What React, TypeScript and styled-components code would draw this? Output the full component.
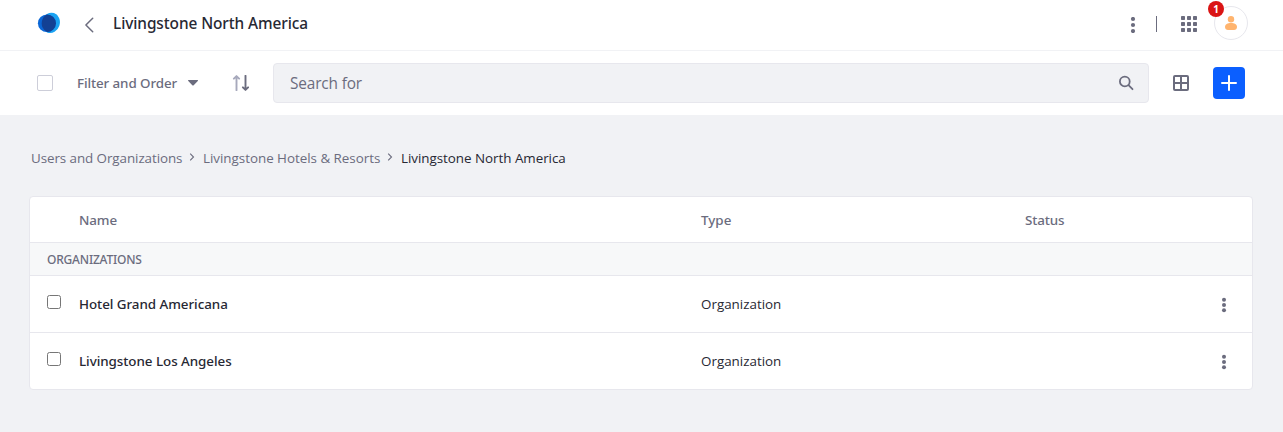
import React from 'react';
import styled, { createGlobalStyle } from 'styled-components';

const color = {
  text: '#272833',
  muted: '#6b6c7e',
  border: '#e7e7ed',
  page: '#f1f2f5',
  primary: '#0b5fff',
};

const GlobalStyle = createGlobalStyle`
  *, *::before, *::after { box-sizing: border-box; }
  body {
    margin: 0;
    background: ${color.page};
    color: ${color.text};
    font-family: 'Segoe UI', 'Open Sans', 'Noto Sans', sans-serif;
    font-size: 13.4px;
    line-height: 20px;
  }
  svg { display: block; flex: none; }
  button { font: inherit; border: 0; padding: 0; background: none; color: inherit; }
`;

const Page = styled.div`
  min-height: 432px;
  background: ${color.page};
`;

const Label = styled.span<{ $track?: number; $weight?: number; $size?: number }>`
  white-space: nowrap;
  letter-spacing: ${(p) => p.$track ?? 0}px;
  font-family: ${(p) => (p.$weight ? "'Segoe UI', 'Noto Sans', sans-serif" : 'inherit')};
  font-weight: ${(p) => p.$weight ?? 400};
  font-size: ${(p) => p.$size ?? 13.4}px;
`;

const Header = styled.header`
  display: flex;
  align-items: center;
  height: 51px;
  padding: 0 35px 4px 37px;
  background: #fff;
  border-bottom: 1px solid #f1f2f5;
`;

const BackButton = styled.button`
  display: flex;
  margin: 3px 18px 0 23px;
  color: ${color.muted};
`;

const Title = styled.h1`
  display: flex;
  flex: 1;
  margin: 0;
  padding-top: 2px;
  line-height: 24px;
`;

const IconButton = styled.button`
  display: flex;
  color: ${color.muted};
`;

const HeaderTools = styled.div`
  display: flex;
  align-items: center;
`;

const OptionsButton = styled(IconButton)`
  margin-top: 4px;
`;

const AppsButton = styled(IconButton)`
  margin-top: 2px;
`;

const Divider = styled.span`
  width: 1px;
  height: 16px;
  margin: 2px 24px 0 15px;
  background: ${color.muted};
`;

const Avatar = styled.div`
  position: relative;
  display: flex;
  align-items: center;
  justify-content: center;
  width: 34px;
  height: 34px;
  margin-left: 17px;
  border: 1px solid ${color.border};
  border-radius: 50%;
`;

const Badge = styled.span`
  position: absolute;
  top: -6px;
  left: -7px;
  width: 16px;
  height: 16px;
  border-radius: 50%;
  background: #da1414;
  color: #fff;
  font-size: 10px;
  font-weight: 700;
  line-height: 16px;
  text-align: center;
`;

const Toolbar = styled.div`
  display: flex;
  align-items: center;
  height: 64px;
  padding: 0 38px 0 37px;
  background: #fff;
`;

const SelectAll = styled.span`
  width: 16px;
  height: 16px;
  margin-right: 24px;
  border: 1px solid #cdced9;
  border-radius: 2px;
  background: #fff;
`;

const FilterButton = styled.button`
  display: flex;
  align-items: center;
  width: 122px;
  justify-content: space-between;
  color: ${color.muted};
`;

const SortButton = styled(IconButton)`
  margin: 0 24px 0 33px;
`;

const SearchBox = styled.div`
  display: flex;
  flex: 1;
  align-items: center;
  justify-content: space-between;
  height: 40px;
  padding: 0 14px 0 16px;
  border: 1px solid ${color.border};
  border-radius: 4px;
  background: ${color.page};
  color: ${color.muted};
`;

const Placeholder = styled(Label)`
  padding-top: 2px;
`;

const ViewButton = styled(IconButton)`
  margin: 0 24px;
`;

const AddButton = styled.button`
  display: flex;
  align-items: center;
  justify-content: center;
  width: 32px;
  height: 32px;
  border-radius: 4px;
  background: ${color.primary};
  color: #fff;
`;

const Breadcrumb = styled.nav`
  display: flex;
  align-items: center;
  height: 20px;
  margin: 33px 0 28px 31px;
  color: ${color.muted};
`;

const Crumb = styled.span<{ $width?: number; $current?: boolean }>`
  display: flex;
  width: ${(p) => (p.$width ? `${p.$width}px` : 'auto')};
  color: ${(p) => (p.$current ? color.text : 'inherit')};
`;

const CrumbArrow = styled.span`
  display: flex;
  width: 21px;
  padding: 0 0 2px 7px;
`;

const Table = styled.section`
  width: 1224px;
  margin-left: 29px;
  border: 1px solid ${color.border};
  border-radius: 4px;
  background: #fff;
  overflow: hidden;
`;

const Row = styled.div<{ $head?: boolean }>`
  display: grid;
  grid-template-columns: 32px 622px 324px 1fr 16px;
  align-items: center;
  height: ${(p) => (p.$head ? 45 : 56)}px;
  padding: 0 20px 0 17px;
  color: ${(p) => (p.$head ? color.muted : color.text)};
`;

const GroupRow = styled.div`
  height: 34px;
  padding-left: 17px;
  border: solid ${color.border};
  border-width: 1px 0;
  background: #f7f8f9;
  color: ${color.muted};
  line-height: 32px;
`;

const Rule = styled.div`
  height: 1px;
  background: ${color.border};
`;

const RowCheckbox = styled.span`
  width: 14px;
  height: 14px;
  margin-bottom: 4px;
  border: 1px solid #767676;
  border-radius: 2.5px;
`;

const RowMenu = styled(IconButton)`
  padding-top: 2px;
`;

const Kebab = ({ step = 6, r = 2.1 }: { step?: number; r?: number }) => (
  <svg width="16" height="16" viewBox="0 0 16 16" fill="currentColor">
    <circle cx="8" cy={8 - step} r={r} />
    <circle cx="8" cy="8" r={r} />
    <circle cx="8" cy={8 + step} r={r} />
  </svg>
);

const Logo = () => (
  <svg width="24" height="22" viewBox="0 0 24 22">
    <clipPath id="logo-overlap">
      <ellipse cx="9.900" cy="11.200" rx="9" ry="8.800" />
    </clipPath>
    <ellipse cx="13.800" cy="10.900" rx="9" ry="10.300" transform="rotate(18 13.800 10.900)" fill="#1ba3f2" />
    <ellipse cx="9.900" cy="11.200" rx="9" ry="8.800" fill="#0b67d6" />
    <g clipPath="url(#logo-overlap)">
      <ellipse cx="13.800" cy="10.900" rx="9" ry="9.800" transform="rotate(18 13.800 10.900)" fill="#134194" />
    </g>
  </svg>
);

const crumbs = [
  { text: 'Users and Organizations', width: 151, track: -0.07 },
  { text: 'Livingstone Hotels & Resorts', width: 177, track: -0.02 },
];

const rows = ['Hotel Grand Americana', 'Livingstone Los Angeles'];

const CrumbChevron = () => (
  <CrumbArrow>
    <svg width="6" height="8" viewBox="0 0 6 8" fill="none" stroke="currentColor" strokeWidth="1.100">
      <path d="M1.200.7 4.500 4 1.200 7.300" />
    </svg>
  </CrumbArrow>
);

export default function App() {
  return (
    <Page>
      <GlobalStyle />
      <Header>
        <Logo />
        <BackButton aria-label="Back">
          <svg width="11" height="16" viewBox="0 0 11 16" fill="none" stroke="currentColor" strokeWidth="1.500" strokeLinecap="round" strokeLinejoin="round">
            <path d="M8.700 1.200 1.900 8l6.800 6.800" />
          </svg>
        </BackButton>
        <Title>
          <Label $size={15.4} $weight={500} $track={-0.08}>Livingstone North America</Label>
        </Title>
        <HeaderTools>
          <OptionsButton aria-label="Options"><Kebab /></OptionsButton>
          <Divider />
          <AppsButton aria-label="Applications">
            <svg width="16" height="16" viewBox="0 0 16 16" fill="currentColor">
              {[0, 6, 12].map((y) => [0, 6, 12].map((x) => (
                <rect key={`${x}-${y}`} x={x} y={y} width="4" height="4" rx=".7" />
              )))}
            </svg>
          </AppsButton>
          <Avatar>
            <svg width="14" height="16" viewBox="0 0 14 16" fill="#ffb46e">
              <circle cx="7" cy="4.200" r="3.200" />
              <path d="M1 12c0-2.600 2.600-4 6-4s6 1.400 6 4c0 1.900-1.300 3-3 3H4c-1.700 0-3-1.100-3-3Z" />
            </svg>
            <Badge>1</Badge>
          </Avatar>
        </HeaderTools>
      </Header>

      <Toolbar>
        <SelectAll />
        <FilterButton>
          <Label $weight={500} $track={-0.1}>Filter and Order</Label>
          <svg width="12" height="8" viewBox="0 0 12 8" fill="currentColor">
            <path d="M1.700 1h8.700c.6 0 .8.600.4 1L6.700 6.300c-.4.4-1 .4-1.400 0L1.300 2c-.4-.4-.2-1 .4-1Z" />
          </svg>
        </FilterButton>
        <SortButton aria-label="Sort">
          <svg width="17" height="16" viewBox="0 0 17 16" fill="none" strokeWidth="1.900" strokeLinecap="round" strokeLinejoin="round">
            <path d="M4.500 15.200V1.500M1.900 3.700l2.600-2.600 2.600 2.600" stroke="#a7a9bc" />
            <path d="M13.500.8v13.700M10.900 12.300l2.600 2.600 2.600-2.600" stroke="currentColor" />
          </svg>
        </SortButton>
        <SearchBox>
          <Placeholder $size={15.4} $track={-0.15}>Search for</Placeholder>
          <svg width="16" height="16" viewBox="0 0 16 16" fill="none" stroke="currentColor" strokeWidth="1.800" strokeLinecap="round">
            <circle cx="6.800" cy="6.500" r="4.900" />
            <path d="m10.500 10.200 4 4" />
          </svg>
        </SearchBox>
        <ViewButton aria-label="Change view">
          <svg width="16" height="16" viewBox="0 0 16 16" fill="none" stroke="currentColor" strokeWidth="2">
            <rect x="1" y="1" width="14" height="14" rx="1" />
            <path d="M8 1v14M1 8h14" />
          </svg>
        </ViewButton>
        <AddButton aria-label="Add">
          <svg width="16" height="16" viewBox="0 0 16 16" stroke="currentColor" strokeWidth="2" strokeLinecap="round">
            <path d="M8 1v14M1 8h14" />
          </svg>
        </AddButton>
      </Toolbar>

      <Breadcrumb>
        {crumbs.map((c) => (
          <React.Fragment key={c.text}>
            <Crumb $width={c.width}><Label $track={c.track}>{c.text}</Label></Crumb>
            <CrumbChevron />
          </React.Fragment>
        ))}
        <Crumb $current><Label $track={-0.03}>Livingstone North America</Label></Crumb>
      </Breadcrumb>

      <Table>
        <Row $head>
          <span />
          <Label $weight={500} $track={-0.1}>Name</Label>
          <Label $weight={500}>Type</Label>
          <Label $weight={500} $track={-0.15}>Status</Label>
        </Row>
        <GroupRow><Label $size={12} $weight={500} $track={-0.2}>ORGANIZATIONS</Label></GroupRow>
        {rows.map((name, i) => (
          <React.Fragment key={name}>
            {i > 0 && <Rule />}
            <Row>
              <RowCheckbox />
              <Label $weight={500} $track={-0.05}>{name}</Label>
              <Label>Organization</Label>
              <span />
              <RowMenu aria-label="Actions"><Kebab step={5.300} r={2} /></RowMenu>
            </Row>
          </React.Fragment>
        ))}
      </Table>
    </Page>
  );
}
